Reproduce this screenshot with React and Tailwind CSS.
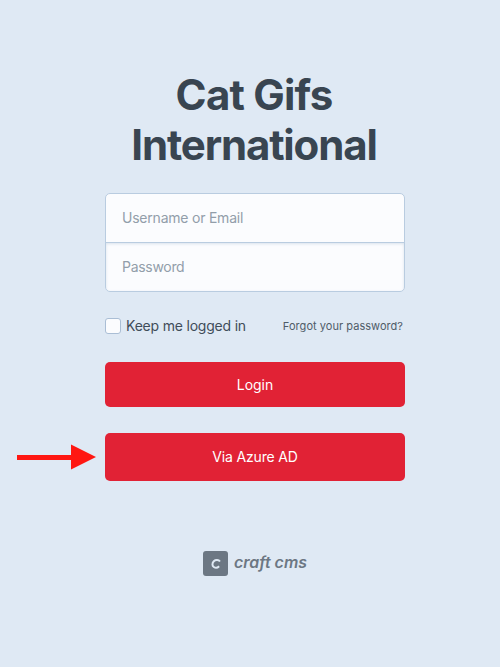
function Arrow() {
  return (
    <svg className="absolute top-[11px] -left-[88px] h-[26px] w-[80px]" viewBox="0 0 80 26" aria-hidden="true">
      <path d="M0 11h54V0.5L79 13 54 25.5V16H0z" fill="#ff1712" />
    </svg>
  );
}

function CraftLogo() {
  return (
    <div className="mt-[70px] flex items-center pl-[98px]">
      <div className="flex h-[25px] w-[25px] items-center justify-center rounded-[3px] bg-[#6c7783]">
        <svg className="h-[10px] w-[10px]" viewBox="0 0 10 10" fill="none" aria-hidden="true">
          <path d="M9 2.5C7.6.7 4.6.6 2.8 2.3 1 4.1 1 6.8 2.8 8c1.6 1.1 3.8.8 5.3-.8" stroke="#dfe9f4" strokeWidth="2" />
        </svg>
      </div>
      <svg className="ml-[6px] h-[25px] w-[75px]" viewBox="0 0 75 25">
        <text
          x="0"
          y="17"
          textLength="73"
          lengthAdjust="spacingAndGlyphs"
          className="fill-[#6c7783] font-['Inter',sans-serif] text-[15.5px] font-semibold italic [font-feature-settings:'cv11']"
        >
          craft cms
        </text>
      </svg>
    </div>
  );
}

export default function App() {
  return (
    <main className="h-[667px] w-[500px] overflow-hidden bg-[#dfe9f4] pt-[70px] font-['Inter',sans-serif] text-[#3f4d5a]">
      <h1 className="ml-[4px] w-[500px] text-center text-[42px] leading-[50px] font-bold tracking-[-0.8px] text-[#394551]">
        Cat Gifs
        <br />
        <span className="tracking-[-1.15px]">International</span>
      </h1>
      <form className="mt-[23px] ml-[105px] w-[300px]" onSubmit={(e) => e.preventDefault()}>
        <div className="h-[99px] overflow-hidden rounded-[5px] border border-[#b9cce0] bg-[#fbfcfe]">
          <input
            className="block h-[49px] w-full border-b border-[#b9cce0] px-4 pb-[2px] text-[14px] tracking-[-0.22px] outline-none placeholder:text-[#929eaa]"
            placeholder="Username or Email"
          />
          <input
            type="password"
            className="block h-[48px] w-full px-4 pb-[2px] text-[14px] tracking-[-0.3px] shadow-[inset_0_1px_3px_#d9e2ec] outline-none placeholder:text-[#929eaa]"
            placeholder="Password"
          />
        </div>
        <div className="mt-[26px] flex h-4 items-center">
          <input type="checkbox" className="h-4 w-4 appearance-none rounded-[3px] border border-[#aabed5] bg-[#fbfcfe]" />
          <span className="ml-[5px] pb-[2px] text-[14px] tracking-[-0.2px] whitespace-nowrap">Keep me logged in</span>
          <a className="mr-[2px] ml-auto text-[11px] tracking-[0.04px] whitespace-nowrap text-[#4f5c68]">Forgot your password?</a>
        </div>
        <button className="mt-7 block h-[45px] w-full rounded-[5px] bg-[#e12235] text-[14px] text-white">Login</button>
        <div className="relative mt-[26px]">
          <Arrow />
          <button className="block h-12 w-full rounded-[5px] bg-[#e12235] pb-[2px] text-[14px] tracking-[-0.15px] text-white">
            Via Azure AD
          </button>
        </div>
        <CraftLogo />
      </form>
    </main>
  );
}
